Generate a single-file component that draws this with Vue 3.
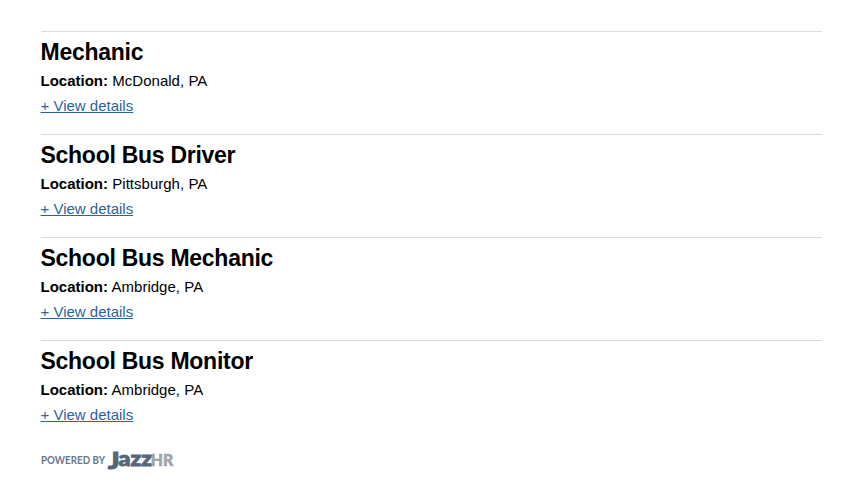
<template>
  <main class="job-board">
    <section v-for="job in jobs" :key="job.title" class="job">
      <h2 class="title">{{ job.title }}</h2>
      <p class="location"><strong>Location:</strong> {{ job.location }}</p>
      <a class="details" href="#" @click.prevent>+ View details</a>
    </section>

    <footer class="powered">
      <svg width="140" height="34" viewBox="0 0 140 34" role="img" aria-label="Powered by JazzHR">
        <text class="by" x="0" y="19" textLength="64" lengthAdjust="spacingAndGlyphs">POWERED BY</text>
        <text class="jazz initial" x="67" y="23.5" textLength="11.5" lengthAdjust="spacingAndGlyphs">J</text>
        <text class="jazz" x="77.5" y="21" textLength="33.5" lengthAdjust="spacingAndGlyphs">azz</text>
        <text class="hr" x="109.8" y="21" textLength="22.5" lengthAdjust="spacingAndGlyphs">HR</text>
      </svg>
    </footer>
  </main>
</template>

<script setup>
const jobs = [
  { title: 'Mechanic', location: 'McDonald, PA' },
  { title: 'School Bus Driver', location: 'Pittsburgh, PA' },
  { title: 'School Bus Mechanic', location: 'Ambridge, PA' },
  { title: 'School Bus Monitor', location: 'Ambridge, PA' },
]
</script>

<style>
body {
  background: #fff;
}
</style>

<style scoped>
.job-board {
  padding: 31px 23px 0 40.5px;
  font-family: 'Liberation Sans', Arial, sans-serif;
  font-size: 15px;
  color: #000;
}

.job {
  height: 103px;
  box-sizing: border-box;
  border-top: 1px solid #dcdcdc;
  padding-top: 7px;
}

.title {
  margin: 0;
  font-size: 23px;
  line-height: 27px;
  font-weight: bold;
  letter-spacing: -0.27px;
}

.location {
  margin: 6px 0 8px;
  line-height: 17px;
  word-spacing: 0.2px;
}

.details {
  display: block;
  width: max-content;
  line-height: 17px;
  color: #2a64a0;
  text-decoration: underline;
}

.powered {
  padding-top: 2px;
}

.powered svg {
  display: block;
  overflow: visible;
}

.by {
  font-family: Lato, sans-serif;
  font-size: 10.5px;
  font-weight: bold;
  fill: #6b7885;
}

.jazz {
  font-family: Lato, sans-serif;
  font-size: 20px;
  font-weight: 900;
  fill: #566779;
  stroke: #566779;
  stroke-width: 0.9px;
}

.initial {
  font-size: 22px;
  stroke-width: 1.1px;
}

.hr {
  font-family: Lato, sans-serif;
  font-size: 16px;
  font-weight: 900;
  fill: #a2a4a7;
  stroke: #a2a4a7;
  stroke-width: 0.6px;
}
</style>
